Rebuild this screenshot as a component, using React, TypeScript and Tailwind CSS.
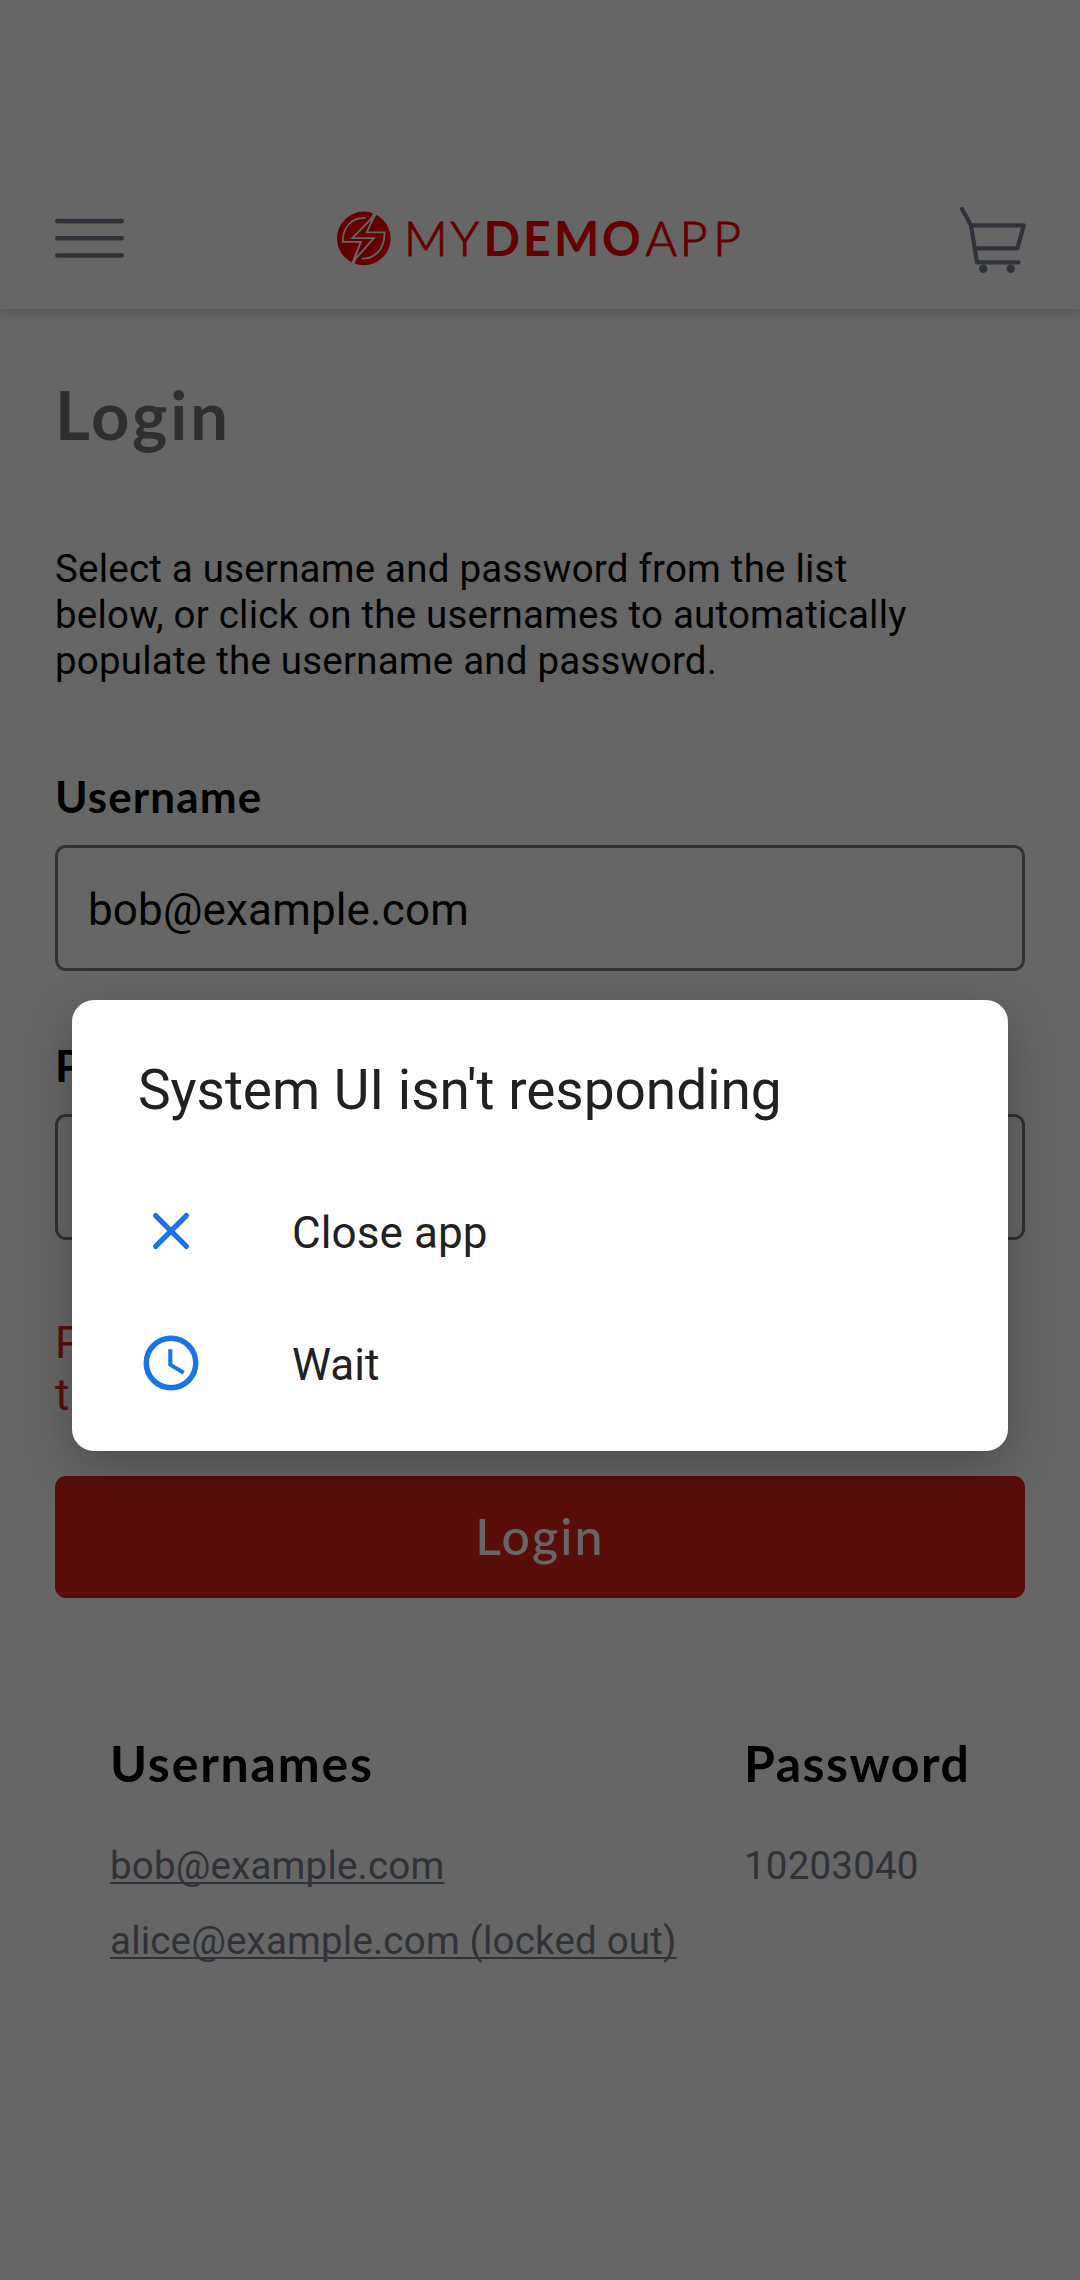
import React from "react";

const ROBOTO = "font-['Roboto','Liberation_Sans',sans-serif]";
const LATO = "font-['Lato','Open_Sans',sans-serif]";

function MenuIcon() {
  return (
    <svg width="69" height="40" viewBox="0 0 69 40" fill="none" stroke="#757d8c" strokeWidth="4.6" strokeLinecap="round">
      <path d="M2.3 3.1H66.7M2.3 20.3H66.7M2.3 37.5H66.7" />
    </svg>
  );
}

function CartIcon() {
  return (
    <svg width="68" height="68" viewBox="0 0 68 68" fill="none" stroke="#757d8c" strokeWidth="4.2" strokeLinecap="round" strokeLinejoin="round">
      <path d="M4 3L13 19.3H65.8L59.5 42.3H17M13 19.3L19 56.3H60.5" />
      <circle cx="25.3" cy="62.8" r="4.2" fill="#757d8c" stroke="none" />
      <circle cx="52.8" cy="62.8" r="4.2" fill="#757d8c" stroke="none" />
    </svg>
  );
}

function Logo() {
  return (
    <svg width="410" height="60" viewBox="336 208 410 60" fill="#fa0000">
      <circle cx="363.8" cy="238.4" r="26.8" />
      <g fill="none" stroke="#ffffff" strokeWidth="1.8">
        <path d="M365.5 218.2C352 217 342.6 227 342.8 241.8H361L353.5 260" />
        <path d="M361.8 258.6C375 259 384.8 249 384.6 232.4H366.8L374.6 215" />
        <path d="M374 216L352.3 238.2H373.8L354.5 260" />
      </g>
      <path d="M373.6 211L377.7 212.5L370 226L370.5 220.3Z" fill="#ffffff" />
      <path d="M354.2 265.8L350.6 264L358 250L357 257Z" fill="#ffffff" />
      <g className={LATO} fontSize="48">
        <text y="256" x="404 450.5" fontWeight="300" stroke="#fa0000" strokeWidth="1.1">MY</text>
        <text y="256" x="483.5 523 554 602" fontWeight="700">DEMO</text>
        <text y="256" x="645.5 679.8 713.3" fontWeight="300" stroke="#fa0000" strokeWidth="1.1">APP</text>
      </g>
    </svg>
  );
}

function Field({ label, value }: { label: string; value: string }) {
  return (
    <label className="flex flex-col">
      <span className={`${LATO} text-[44px] leading-[53px] font-bold tracking-[1.1px] text-black`}>{label}</span>
      <span className="mt-[22px] flex h-[126px] items-center rounded-[11px] border-[3px] border-[#757d8c] pl-[30px] pt-[3px] text-[44px] leading-[52px] tracking-[0.15px] text-black">
        {value}
      </span>
    </label>
  );
}

function CloseIcon() {
  return (
    <svg width="66" height="66" viewBox="0 0 24 24" fill="none" stroke="#1a73e8" strokeWidth="1.9" strokeLinecap="round">
      <path d="M6.4 6.4L17.6 17.6M17.6 6.4L6.4 17.6" />
    </svg>
  );
}

function ClockIcon() {
  return (
    <svg width="66" height="66" viewBox="0 0 24 24" fill="#1a73e8">
      <circle cx="12" cy="12" r="9" fill="none" stroke="#1a73e8" strokeWidth="2" />
      <path d="M12.5 7H11v6l5.25 3.15.75-1.23-4.5-2.67z" />
    </svg>
  );
}

export default function App() {
  return (
    <div className={`${ROBOTO} relative h-[2280px] w-[1080px] overflow-hidden bg-white`}>
      <header className="flex h-[309px] items-end justify-between pb-[35px] pl-[55px] pr-[54px] shadow-[0_3px_11px_rgba(0,0,0,0.2)]">
        <div className="pb-[16px]"><MenuIcon /></div>
        <div className="pb-[6px]"><Logo /></div>
        <CartIcon />
      </header>

      <main className="flex flex-col px-[55px] pt-[65px]">
        <h1 className={`${LATO} text-[67px] leading-[80px] font-bold tracking-[2.9px] text-[#767676]`}>Login</h1>
        <p className="mt-[92px] text-[38.5px] leading-[46px] tracking-[0.21px] text-black">
          Select a username and password from the list
          <br />
          below, or click on the usernames to automatically
          <br />
          populate the username and password.
        </p>
        <div className="mt-[86px]"><Field label="Username" value="bob@example.com" /></div>
        <div className="mt-[68px]"><Field label="Password" value="" /></div>
        <p className="mt-[77px] whitespace-nowrap text-[44px] leading-[52px] text-[#e2231a]">
          Provided credentials do not match any user in
          <br />
          this service.
        </p>
        <button className={`${LATO} mt-[55px] h-[122px] rounded-[11px] bg-[#e2231a] pb-[3px] text-[50px] leading-[60px] font-medium tracking-[2.2px] text-white`}>
          Login
        </button>
        <section className="mt-[135px] flex pl-[55px]">
          <div className="flex w-[634px] flex-col items-start">
            <h2 className={`${LATO} text-[50px] leading-[60px] font-bold tracking-[1.8px] text-black`}>Usernames</h2>
            <a className="mt-[50px] text-[38.5px] leading-[46px] tracking-[0.2px] text-[#757d8c] underline decoration-2 underline-offset-[3px] [text-decoration-skip-ink:none]">bob@example.com</a>
            <a className="mt-[29px] text-[38.5px] leading-[46px] tracking-[0.2px] text-[#757d8c] underline decoration-2 underline-offset-[3px] [text-decoration-skip-ink:none]">alice@example.com (locked out)</a>
          </div>
          <div className="flex flex-col items-start">
            <h2 className={`${LATO} text-[50px] leading-[60px] font-bold tracking-[1.5px] text-black`}>Password</h2>
            <span className="mt-[50px] text-[38.5px] leading-[46px] tracking-[0.2px] text-[#757d8c]">10203040</span>
          </div>
        </section>
      </main>

      <div className="absolute inset-0 bg-black/60 pt-[1000px]">
        <div role="dialog" className="mx-[72px] h-[451px] rounded-[22px] bg-white pl-[66px] pt-[58px] text-[#212121] shadow-[0_16px_50px_rgba(0,0,0,0.26)]">
          <h2 className="text-[55px] leading-[65px] tracking-[-0.05px]">System UI isn't responding</h2>
          <div className="mt-[42px] flex h-[132px] items-center gap-[88px] text-[44px] leading-[52px] tracking-[0.1px]">
            <CloseIcon />
            <span className="pt-[3px]">Close app</span>
          </div>
          <div className="flex h-[132px] items-center gap-[88px] text-[44px] leading-[52px]">
            <ClockIcon />
            <span className="pt-[3px]">Wait</span>
          </div>
        </div>
      </div>
    </div>
  );
}
